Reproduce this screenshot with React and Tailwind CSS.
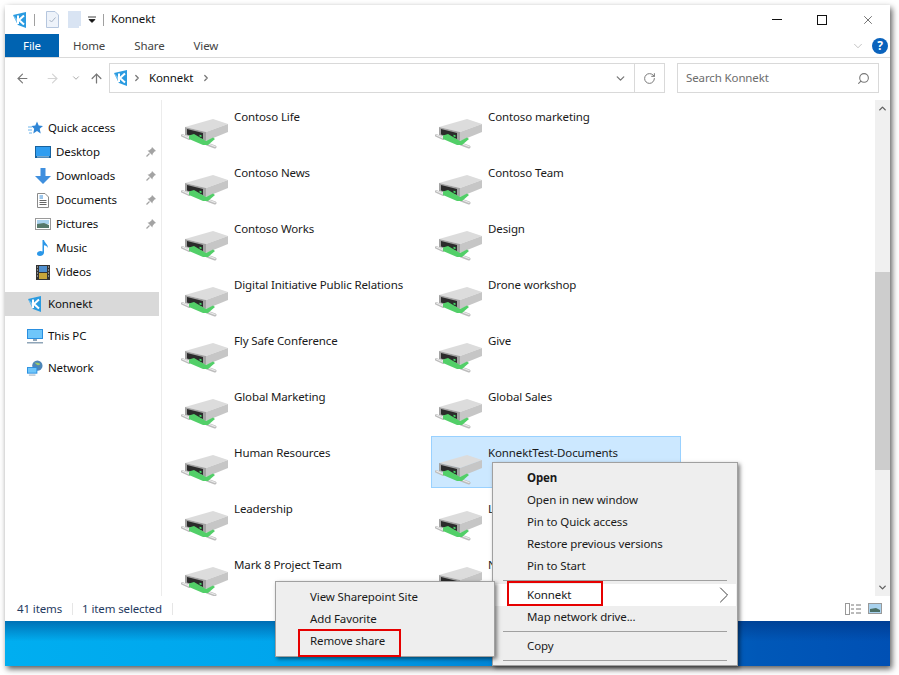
import React from "react";
import { ArrowLeft, ArrowRight, ArrowUp, ChevronDown, ChevronRight, ChevronUp, RotateCw, Search, X } from "lucide-react";

const leftCol = ["Contoso Life", "Contoso News", "Contoso Works", "Digital Initiative Public Relations", "Fly Safe Conference", "Global Marketing", "Human Resources", "Leadership", "Mark 8 Project Team"];
const rightCol = ["Contoso marketing", "Contoso Team", "Design", "Drone workshop", "Give", "Global Sales", "KonnektTest-Documents", "Legal", "News"];

function KonnektLogo() {
    return (
        <svg width="14" height="16" viewBox="0 0 14 16" className="shrink-0">
            <path d="M0 3 L13 0 V16 L5 13 Z" fill="#2b9be0" />
            <path d="M0 3 L5 8 L5 13 Z" fill="#7cc4f0" />
            <path d="M5 3.5 V12 M11 3.5 L6 8 L11 12.5" stroke="#fff" strokeWidth="2" fill="none" />
        </svg>
    );
}

function DriveIcon() {
    return (
        <svg width="48" height="48" viewBox="6 7 48 48" className="shrink-0 mt-[7px] ml-1">
            <path d="M10 27 L38 19 L53 24 L31 32 Z" fill="#dcdcdc" />
            <path d="M31 32 L53 24 V32 L31 41 Z" fill="#c6c6c6" />
            <path d="M10 27 L31 32 V41 L10 35 Z" fill="#a2a2a2" />
            <path d="M12 29 L28 33 V39 L12 34.5 Z" fill="#2b2b2b" />
            <path d="M24.5 34.8 L26.5 35.3 V37 L24.5 36.5 Z" fill="#45e06a" />
            <path d="M7.5 35.5 L14 38.5 M32 44 L40 47" stroke="#bdbdbd" strokeWidth="3" strokeLinecap="round" />
            <path d="M7.5 35 L14 38 M32 43.5 L40 46.5" stroke="#ececec" strokeWidth="1.2" strokeLinecap="round" />
            <path d="M14 35.5 L19 34 L31 41 L38 37.5 L40 39 L33 45 L28 45 L14 39 Z" fill="#52cf68" />
        </svg>
    );
}

function Tile({ name, selected }) {
    return (
        <div className={`flex h-[52px] w-[250px] ${selected ? "bg-[#cce8ff] ring-1 ring-inset ring-[#99d1ff]" : ""}`}>
            <DriveIcon />
            <span className="ml-[5px] pt-[9px] leading-4 text-[#1a1a1a]">{name}</span>
        </div>
    );
}

function PinIcon() {
    return (
        <svg width="12" height="12" viewBox="0 0 12 12" className="absolute left-[140px]">
            <path d="M7 1 L11 5 L9.5 5.5 L7.5 8 L7.5 9.5 L2.5 4.5 L4 4.5 L6.5 2.5 Z" fill="#a3a3a3" />
            <path d="M4.5 7.5 L1.5 10.5" stroke="#a3a3a3" strokeWidth="1.3" />
        </svg>
    );
}

function NavRow({ icon, label, pinned, sub, active }) {
    return (
        <div className={`relative flex h-6 items-center ${sub ? "pl-[30px]" : "pl-[22px]"} ${active ? "bg-[#d9d9d9] w-[154px]" : ""}`}>
            <span className="flex w-4 justify-center">{icon}</span>
            <span className="ml-[5px] text-[#111]">{label}</span>
            {pinned && <PinIcon />}
        </div>
    );
}

const icons = {
    quick: (
        <svg width="15" height="14" viewBox="0 0 15 14">
            <path d="M9 0.5 L10.7 4.6 L15 5 L11.7 7.8 L12.7 12.5 L9 10 L5.3 12.5 L6.2 7.8 L3.4 5 L7.3 4.6 Z" fill="#2f86d6" />
            <path d="M0 6 H4 M0 9 H4 M1 12 H4" stroke="#6db4ec" strokeWidth="1" />
        </svg>
    ),
    desktop: (
        <svg width="16" height="12" viewBox="0 0 16 12">
            <rect width="16" height="12" fill="#17629e" />
            <rect x="1" y="1" width="14" height="9" fill="#2f9df0" />
            <rect x="2" y="10.5" width="12" height="0.8" fill="#cfe7fa" />
        </svg>
    ),
    downloads: (
        <svg width="16" height="16" viewBox="0 0 16 16">
            <path d="M5.5 0 H10.5 V8 H16 L8 16 L0 8 H5.5 Z" fill="#3f8fde" />
        </svg>
    ),
    documents: (
        <svg width="12" height="15" viewBox="0 0 12 15">
            <path d="M0.5 0.5 H8 L11.5 4 V14.5 H0.5 Z" fill="#fff" stroke="#8a8a8a" />
            <path d="M2.5 3 H6 M2.5 5 H6" stroke="#3b8ed8" />
            <path d="M2.5 7.5 H9.5 M2.5 9.5 H9.5 M2.5 11.5 H9.5" stroke="#666" />
        </svg>
    ),
    pictures: (
        <svg width="16" height="12" viewBox="0 0 16 12">
            <rect x="0.5" y="0.5" width="15" height="11" fill="#fff" stroke="#9a9a9a" />
            <rect x="2" y="2" width="12" height="4" fill="#a9d2ee" />
            <path d="M2 6 L9 5 L14 7 V10 H2 Z" fill="#55786a" />
        </svg>
    ),
    music: (
        <svg width="12" height="16" viewBox="0 0 12 16">
            <path d="M5.5 0 H7 C7.5 3 11 4 11 8 C10 6 8.5 5.5 7 5.2 V12.5 C7 14.5 5 16 3 16 C1 16 0 15 0 13.7 C0 12 2 11 3.5 11 C4.3 11 5 11.2 5.5 11.5 Z" fill="#2b97e8" />
        </svg>
    ),
    videos: (
        <svg width="14" height="15" viewBox="0 0 14 15">
            <rect width="14" height="15" fill="#333" />
            <rect x="3" y="1" width="8" height="6" fill="#4f8fcf" />
            <rect x="3" y="8" width="8" height="6" fill="#c7a53a" />
            <path d="M1 2 H2 M1 5 H2 M1 8 H2 M1 11 H2 M12 2 H13 M12 5 H13 M12 8 H13 M12 11 H13" stroke="#ddd" />
        </svg>
    ),
    pc: (
        <svg width="16" height="15" viewBox="0 0 16 15">
            <rect width="16" height="10" fill="#2a8fe0" />
            <rect x="1" y="1" width="14" height="8" fill="#6fc6fa" />
            <rect x="6" y="10" width="4" height="2" fill="#8fa5b8" />
            <rect y="13" width="16" height="1.5" fill="#8fa5b8" />
        </svg>
    ),
    network: (
        <svg width="17" height="16" viewBox="0 0 17 16">
            <circle cx="11" cy="5.5" r="5.5" fill="#4d86b8" />
            <path d="M8 2 C10 3 13 2 14 4 C12 6 10 5 8 2" fill="#9cc96b" />
            <rect x="0" y="7" width="11" height="7" fill="#2a8fe0" />
            <rect x="1" y="8" width="9" height="5" fill="#6fc6fa" />
            <rect x="2" y="15" width="7" height="1" fill="#8fa5b8" />
        </svg>
    ),
};

function MenuItem({ children, bold, active, right }) {
    return (
        <div className={`relative flex h-[22px] items-center ${active ? "mx-[2px] w-[241px] bg-white pl-[32px]" : "pl-[34px]"} ${bold ? "font-bold" : ""} text-[#1a1a1a]`}>
            {children}
            {right}
        </div>
    );
}

export default function App() {
    return (
        <div className="relative h-[675px] w-[899px] overflow-hidden bg-white p-[5px] font-['Noto_Sans',sans-serif] text-[11.5px] tracking-[-0.12px]">
            <div className="flex h-[661px] w-[885px] flex-col bg-white shadow-[2px_3px_6px_rgba(0,0,0,0.65)]">
                {/* Title bar */}
                <div className="flex h-[29px] items-center pl-2">
                    <KonnektLogo />
                    <div className="ml-[7px] h-3 w-px bg-[#a0a0a0]" />
                    <svg width="13" height="17" viewBox="0 0 13 17" className="ml-[11px]">
                        <path d="M0.5 0.5 H9 L12.5 4 V16.5 H0.5 Z" fill="#eef3fa" stroke="#b5c6de" />
                        <path d="M3.5 9 L5.5 11 L9.5 6.5" stroke="#a8b4c4" fill="none" />
                    </svg>
                    <svg width="13" height="17" viewBox="0 0 13 17" className="ml-[9px]">
                        <path d="M0 0 H13 V17 H0 Z" fill="#d9e4f3" />
                        <path d="M11 15 H13 V17 H11 Z" fill="#fff" />
                    </svg>
                    <svg width="8" height="8" viewBox="0 0 8 8" className="ml-[7px]">
                        <path d="M0 1 H8 M1 3.5 H7 L4 6.5 Z" stroke="#111" fill="#111" strokeWidth="0.8" />
                    </svg>
                    <div className="ml-[7px] h-3 w-px bg-[#a0a0a0]" />
                    <span className="ml-[7px] -mt-[2px] text-[#111]">Konnekt</span>
                    <div className="ml-auto flex items-center">
                        <div className="h-px w-[10px] bg-[#111]" />
                        <div className="ml-[35px] h-[10px] w-[10px] border border-[#111]" />
                        <X size={14} strokeWidth={1} className="mr-[15px] ml-[34px] text-[#111]" />
                    </div>
                </div>

                {/* Ribbon tabs */}
                <div className="flex h-6 items-stretch border-b border-[#dadada] text-[#444]">
                    <div className="flex h-[23px] w-[54px] items-center justify-center bg-[#0063b1] text-white">File</div>
                    <div className="ml-[14px] flex items-center">Home</div>
                    <div className="ml-[29px] flex items-center">Share</div>
                    <div className="ml-[29px] flex items-center">View</div>
                    <div className="ml-auto flex items-center pr-[2px]">
                        <ChevronDown size={14} strokeWidth={1} className="text-[#9a9a9a]" />
                        <div className="ml-[7px] flex h-4 w-4 items-center justify-center rounded-full bg-[#0a63bd] text-[12px] font-bold text-white">?</div>
                    </div>
                </div>

                {/* Address bar */}
                <div className="flex h-[42px] items-start pt-[5px]">
                    <div className="flex h-[30px] w-[104px] items-center pl-[10px] text-[#777]">
                        <ArrowLeft size={15} strokeWidth={1.8} />
                        <ArrowRight size={15} strokeWidth={1.8} className="ml-[15px] text-[#d4d4d4]" />
                        <ChevronDown size={10} strokeWidth={2} className="ml-[11px] text-[#9a9a9a]" />
                        <ArrowUp size={15} strokeWidth={2} className="ml-[8px]" />
                    </div>
                    <div className="flex h-[30px] w-[556px] items-center border border-[#d9d9d9] pl-[4px]">
                        <KonnektLogo />
                        <ChevronRight size={10} strokeWidth={3} className="ml-[4px] text-[#777]" />
                        <span className="ml-[7px] text-[#111]">Konnekt</span>
                        <ChevronRight size={10} strokeWidth={3} className="ml-[8px] text-[#777]" />
                        <ChevronDown size={13} strokeWidth={2.4} className="ml-auto mr-[7px] text-[#777]" />
                        <div className="flex h-full w-[30px] items-center justify-center border-l border-[#d9d9d9]">
                            <RotateCw size={13} strokeWidth={1.8} className="text-[#777]" />
                        </div>
                    </div>
                    <div className="ml-[12px] flex h-[30px] w-[202px] items-center justify-between border border-[#d9d9d9] px-2 text-[#6d6d6d]">
                        <span>Search Konnekt</span>
                        <Search size={13} strokeWidth={2} className="-scale-x-100 text-[#777]" />
                    </div>
                </div>

                {/* Main area */}
                <div className="flex h-[496px]">
                    <div className="w-[157px] border-r border-[#ececec] pt-4">
                        <NavRow icon={icons.quick} label="Quick access" />
                        <NavRow sub icon={icons.desktop} label="Desktop" pinned />
                        <NavRow sub icon={icons.downloads} label="Downloads" pinned />
                        <NavRow sub icon={icons.documents} label="Documents" pinned />
                        <NavRow sub icon={icons.pictures} label="Pictures" pinned />
                        <NavRow sub icon={icons.music} label="Music" />
                        <NavRow sub icon={icons.videos} label="Videos" />
                        <div className="mt-2"><NavRow active icon={<KonnektLogo />} label="Konnekt" /></div>
                        <div className="mt-2"><NavRow icon={icons.pc} label="This PC" /></div>
                        <div className="mt-2"><NavRow icon={icons.network} label="Network" /></div>
                    </div>
                    <div className="flex-1 overflow-hidden pl-[15px]">
                        <div className="grid grid-cols-[250px_250px] gap-1">
                            {leftCol.map((name, i) => (
                                <React.Fragment key={name}>
                                    <Tile name={name} />
                                    <Tile name={rightCol[i]} selected={rightCol[i] === "KonnektTest-Documents"} />
                                </React.Fragment>
                            ))}
                        </div>
                    </div>
                    <div className="flex w-[15px] flex-col items-center bg-[#f0f0f0]">
                        <div className="flex h-[17px] w-full items-center justify-center">
                            <ChevronUp size={11} strokeWidth={3} className="text-[#606060]" />
                        </div>
                        <div className="mt-[155px] h-[198px] w-full bg-[#cdcdcd]" />
                        <div className="mt-auto flex h-[17px] w-full items-center justify-center">
                            <ChevronDown size={11} strokeWidth={3} className="text-[#606060]" />
                        </div>
                    </div>
                </div>

                {/* Status bar */}
                <div className="flex h-[25px] items-center pl-3 text-[#1f3a5f]">
                    <span>41 items</span>
                    <div className="ml-[10px] h-3 w-px bg-[#e6e6e6]" />
                    <span className="ml-[9px]">1 item selected</span>
                    <div className="ml-[10px] h-3 w-px bg-[#e6e6e6]" />
                    <div className="ml-auto flex items-center pr-2">
                        <svg width="16" height="12" viewBox="0 0 16 12">
                            <rect x="0.5" y="0.5" width="4" height="11" fill="#fff" stroke="#999" />
                            <path d="M6 2 H9 M11 2 H16 M6 6 H9 M11 6 H16 M6 10 H9 M11 10 H16" stroke="#777" />
                        </svg>
                        <svg width="14" height="11" viewBox="0 0 14 11" className="ml-[7px]">
                            <rect x="0.5" y="0.5" width="13" height="10" fill="#a9d2ee" stroke="#999" />
                            <path d="M2 6 L8 5 L12 7 V9 H2 Z" fill="#4b6f66" />
                        </svg>
                    </div>
                </div>

                {/* Desktop behind the window */}
                <div className="flex-1 bg-[linear-gradient(to_bottom,rgba(0,40,110,0.45),rgba(0,40,110,0)_45%),linear-gradient(to_right,#00aef0_0%,#00a4ec_35%,#0058b8_85%,#0050b4_100%)]" />
            </div>

            {/* Main context menu */}
            <div className="absolute top-[462px] left-[492px] h-[204px] w-[246px] border border-[#a0a0a0] bg-[#eeeeee] pt-[4px] shadow-[2px_2px_4px_rgba(0,0,0,0.5)]">
                <MenuItem bold>Open</MenuItem>
                <MenuItem>Open in new window</MenuItem>
                <MenuItem>Pin to Quick access</MenuItem>
                <MenuItem>Restore previous versions</MenuItem>
                <MenuItem>Pin to Start</MenuItem>
                <div className="mx-[10px] my-[3px] h-px bg-[#a0a0a0]" />
                <MenuItem active right={<ChevronRight size={28} strokeWidth={0.8} className="absolute right-[-2px] text-[#333]" />}>Konnekt</MenuItem>
                <MenuItem>Map network drive...</MenuItem>
                <div className="mx-[10px] my-[3px] h-px bg-[#a0a0a0]" />
                <MenuItem>Copy</MenuItem>
                <div className="mx-[10px] my-[3px] h-px bg-[#a0a0a0]" />
                <div className="absolute top-[118px] left-[14px] h-[25px] w-[96px] border-2 border-[#e60000]" />
            </div>

            {/* Submenu */}
            <div className="absolute top-[581px] left-[275px] h-[76px] w-[220px] border border-[#a0a0a0] bg-[#eeeeee] pt-[4px] shadow-[2px_2px_4px_rgba(0,0,0,0.5)]">
                <MenuItem>View Sharepoint Site</MenuItem>
                <MenuItem>Add Favorite</MenuItem>
                <MenuItem>Remove share</MenuItem>
                <div className="absolute top-[47px] left-[22px] h-[28px] w-[103px] border-2 border-[#e60000]" />
            </div>
        </div>
    );
}
